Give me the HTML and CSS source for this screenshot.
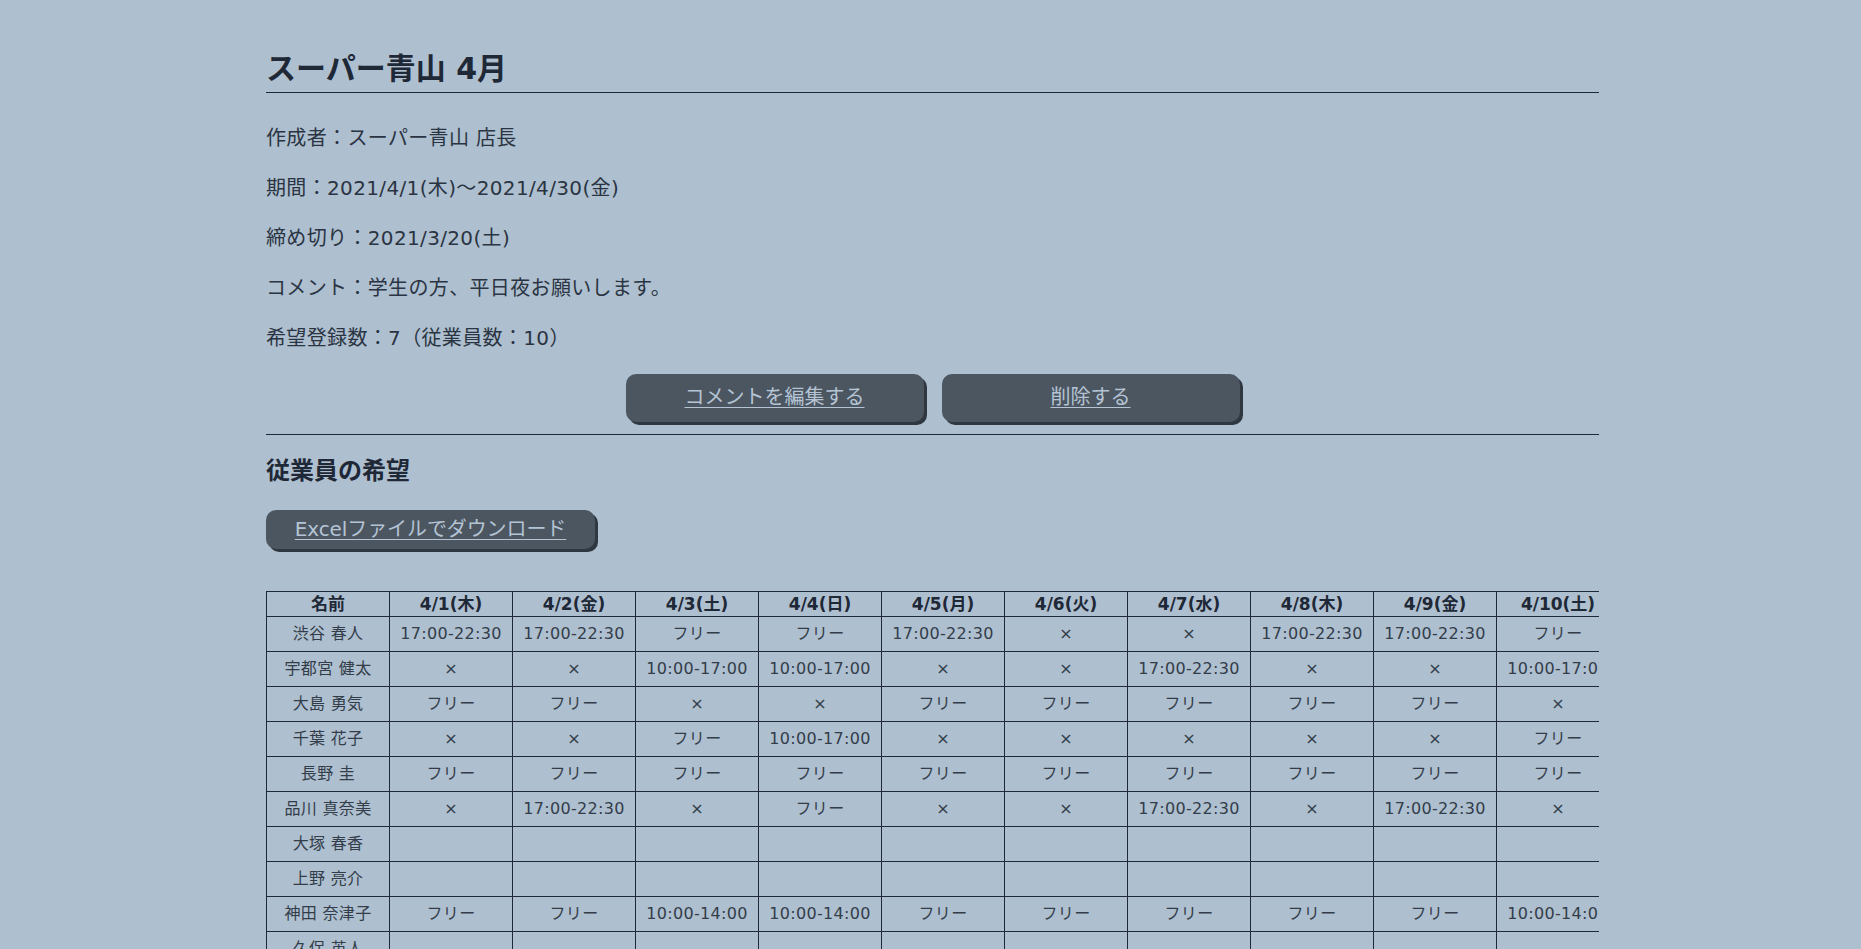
FILE: index.html
```html
<!DOCTYPE html>
<html lang="ja">
<head>
<meta charset="utf-8">
<title>スーパー青山 4月</title>
<link rel="stylesheet" href="styles.css">
</head>
<body>
<div class="page">
  <h1 class="title">スーパー青山 4月</h1>
  <div class="info">
    <p>作成者：スーパー青山 店長</p>
    <p>期間：2021/4/1(木)〜2021/4/30(金)</p>
    <p>締め切り：2021/3/20(土)</p>
    <p>コメント：学生の方、平日夜お願いします。</p>
    <p>希望登録数：7（従業員数：10）</p>
  </div>
  <div class="actions">
    <a class="btn btn-action" href="#">コメントを編集する</a>
    <a class="btn btn-action" href="#">削除する</a>
  </div>
  <section class="wishes">
    <h2 class="subtitle">従業員の希望</h2>
    <a class="btn btn-excel" href="#">Excelファイルでダウンロード</a>
    <div class="table-wrap">
      <table class="shift">
        <thead>
          <tr>
            <th>名前</th>
            <th>4/1(木)</th><th>4/2(金)</th><th>4/3(土)</th><th>4/4(日)</th><th>4/5(月)</th><th>4/6(火)</th><th>4/7(水)</th>
            <th>4/8(木)</th><th>4/9(金)</th><th>4/10(土)</th><th>4/11(日)</th><th>4/12(月)</th><th>4/13(火)</th><th>4/14(水)</th>
            <th>4/15(木)</th><th>4/16(金)</th><th>4/17(土)</th><th>4/18(日)</th><th>4/19(月)</th><th>4/20(火)</th><th>4/21(水)</th>
            <th>4/22(木)</th><th>4/23(金)</th><th>4/24(土)</th><th>4/25(日)</th><th>4/26(月)</th><th>4/27(火)</th><th>4/28(水)</th>
            <th>4/29(木)</th><th>4/30(金)</th>
          </tr>
        </thead>
        <tbody>
          <tr>
            <td>渋谷 春人</td>
            <td>17:00-22:30</td><td>17:00-22:30</td><td>フリー</td><td>フリー</td><td>17:00-22:30</td><td>×</td><td>×</td>
            <td>17:00-22:30</td><td>17:00-22:30</td><td>フリー</td><td>フリー</td><td>17:00-22:30</td><td>×</td><td>×</td>
            <td>17:00-22:30</td><td>17:00-22:30</td><td>フリー</td><td>フリー</td><td>17:00-22:30</td><td>×</td><td>×</td>
            <td>17:00-22:30</td><td>17:00-22:30</td><td>フリー</td><td>フリー</td><td>17:00-22:30</td><td>×</td><td>×</td>
            <td>17:00-22:30</td><td>17:00-22:30</td>
          </tr>
          <tr>
            <td>宇都宮 健太</td>
            <td>×</td><td>×</td><td>10:00-17:00</td><td>10:00-17:00</td><td>×</td><td>×</td><td>17:00-22:30</td>
            <td>×</td><td>×</td><td>10:00-17:00</td><td>10:00-17:00</td><td>×</td><td>×</td><td>17:00-22:30</td>
            <td>×</td><td>×</td><td>10:00-17:00</td><td>10:00-17:00</td><td>×</td><td>×</td><td>17:00-22:30</td>
            <td>×</td><td>×</td><td>10:00-17:00</td><td>10:00-17:00</td><td>×</td><td>×</td><td>17:00-22:30</td>
            <td>×</td><td>×</td>
          </tr>
          <tr>
            <td>大島 勇気</td>
            <td>フリー</td><td>フリー</td><td>×</td><td>×</td><td>フリー</td><td>フリー</td><td>フリー</td>
            <td>フリー</td><td>フリー</td><td>×</td><td>×</td><td>フリー</td><td>フリー</td><td>フリー</td>
            <td>フリー</td><td>フリー</td><td>×</td><td>×</td><td>フリー</td><td>フリー</td><td>フリー</td>
            <td>フリー</td><td>フリー</td><td>×</td><td>×</td><td>フリー</td><td>フリー</td><td>フリー</td>
            <td>フリー</td><td>フリー</td>
          </tr>
          <tr>
            <td>千葉 花子</td>
            <td>×</td><td>×</td><td>フリー</td><td>10:00-17:00</td><td>×</td><td>×</td><td>×</td>
            <td>×</td><td>×</td><td>フリー</td><td>10:00-17:00</td><td>×</td><td>×</td><td>×</td>
            <td>×</td><td>×</td><td>フリー</td><td>10:00-17:00</td><td>×</td><td>×</td><td>×</td>
            <td>×</td><td>×</td><td>フリー</td><td>10:00-17:00</td><td>×</td><td>×</td><td>×</td>
            <td>×</td><td>×</td>
          </tr>
          <tr>
            <td>長野 圭</td>
            <td>フリー</td><td>フリー</td><td>フリー</td><td>フリー</td><td>フリー</td><td>フリー</td><td>フリー</td>
            <td>フリー</td><td>フリー</td><td>フリー</td><td>フリー</td><td>フリー</td><td>フリー</td><td>フリー</td>
            <td>フリー</td><td>フリー</td><td>フリー</td><td>フリー</td><td>フリー</td><td>フリー</td><td>フリー</td>
            <td>フリー</td><td>フリー</td><td>フリー</td><td>フリー</td><td>フリー</td><td>フリー</td><td>フリー</td>
            <td>フリー</td><td>フリー</td>
          </tr>
          <tr>
            <td>品川 真奈美</td>
            <td>×</td><td>17:00-22:30</td><td>×</td><td>フリー</td><td>×</td><td>×</td><td>17:00-22:30</td>
            <td>×</td><td>17:00-22:30</td><td>×</td><td>フリー</td><td>×</td><td>×</td><td>17:00-22:30</td>
            <td>×</td><td>17:00-22:30</td><td>×</td><td>フリー</td><td>×</td><td>×</td><td>17:00-22:30</td>
            <td>×</td><td>17:00-22:30</td><td>×</td><td>フリー</td><td>×</td><td>×</td><td>17:00-22:30</td>
            <td>×</td><td>17:00-22:30</td>
          </tr>
          <tr>
            <td>大塚 春香</td>
            <td></td><td></td><td></td><td></td><td></td><td></td><td></td>
            <td></td><td></td><td></td><td></td><td></td><td></td><td></td>
            <td></td><td></td><td></td><td></td><td></td><td></td><td></td>
            <td></td><td></td><td></td><td></td><td></td><td></td><td></td>
            <td></td><td></td>
          </tr>
          <tr>
            <td>上野 亮介</td>
            <td></td><td></td><td></td><td></td><td></td><td></td><td></td>
            <td></td><td></td><td></td><td></td><td></td><td></td><td></td>
            <td></td><td></td><td></td><td></td><td></td><td></td><td></td>
            <td></td><td></td><td></td><td></td><td></td><td></td><td></td>
            <td></td><td></td>
          </tr>
          <tr>
            <td>神田 奈津子</td>
            <td>フリー</td><td>フリー</td><td>10:00-14:00</td><td>10:00-14:00</td><td>フリー</td><td>フリー</td><td>フリー</td>
            <td>フリー</td><td>フリー</td><td>10:00-14:00</td><td>10:00-14:00</td><td>フリー</td><td>フリー</td><td>フリー</td>
            <td>フリー</td><td>フリー</td><td>10:00-14:00</td><td>10:00-14:00</td><td>フリー</td><td>フリー</td><td>フリー</td>
            <td>フリー</td><td>フリー</td><td>10:00-14:00</td><td>10:00-14:00</td><td>フリー</td><td>フリー</td><td>フリー</td>
            <td>フリー</td><td>フリー</td>
          </tr>
          <tr>
            <td>久保 英人</td>
            <td></td><td></td><td></td><td></td><td></td><td></td><td></td>
            <td></td><td></td><td></td><td></td><td></td><td></td><td></td>
            <td></td><td></td><td></td><td></td><td></td><td></td><td></td>
            <td></td><td></td><td></td><td></td><td></td><td></td><td></td>
            <td></td><td></td>
          </tr>
        </tbody>
      </table>
    </div>
  </section>
</div>
</body>
</html>
```

FILE: styles.css
```css
html, body {
  margin: 0;
  padding: 0;
  background: #aebfcf;
}

body {
  font-family: "DejaVu Sans", "Noto Sans CJK JP", sans-serif;
  color: #1e2836;
  padding-left: 4px;
}

.page {
  width: 1333px;
  margin: 0 auto;
  padding-top: 47px;
  padding-bottom: 40px;
}

.title {
  margin: 0;
  font-size: 30px;
  font-weight: bold;
  line-height: 44px;
  padding-bottom: 1px;
  border-bottom: 1px solid #1e2836;
  color: #1e2836;
}

.info {
  margin-top: 30px;
}

.info p {
  margin: 0 0 20px;
  font-size: 20px;
  letter-spacing: 0.35px;
  line-height: 30px;
  color: #2a3442;
}

.info p:last-child {
  margin-bottom: 0;
}

.actions {
  display: flex;
  justify-content: center;
  gap: 18px;
  margin-top: 21px;
  margin-bottom: 12px;
}

.btn {
  display: block;
  box-sizing: border-box;
  background: #4c5661;
  color: #b4c4d4;
  text-decoration: underline;
  text-underline-offset: 3px;
  text-decoration-thickness: 1px;
  font-size: 20px;
  text-align: center;
  border-radius: 10px;
  box-shadow: 3px 3px 0 #2f3740;
}

.btn-action {
  width: 298px;
  height: 48px;
  line-height: 47px;
}

.wishes {
  border-top: 1px solid #1e2836;
}

.subtitle {
  margin: 19px 0 0;
  font-size: 24px;
  font-weight: bold;
  line-height: 34px;
  color: #1e2836;
}

.btn-excel {
  width: 329px;
  height: 39px;
  line-height: 38px;
  margin-top: 22px;
  letter-spacing: -0.1px;
}

.table-wrap {
  margin-top: 42px;
  overflow-x: auto;
  overflow-y: hidden;
}

.shift {
  border-collapse: collapse;
  table-layout: fixed;
}

.shift th,
.shift td {
  width: 122px;
  min-width: 122px;
  border: 1px solid #1e2836;
  text-align: center;
  white-space: nowrap;
  overflow: hidden;
}

.shift th {
  padding: 0;
  line-height: 24px;
  font-size: 17px;
  font-weight: bold;
  color: #1e2836;
}

.shift td {
  padding: 5px 0;
  line-height: 24px;
  font-size: 16px;
  letter-spacing: 0.3px;
  color: #333d4a;
}
```
